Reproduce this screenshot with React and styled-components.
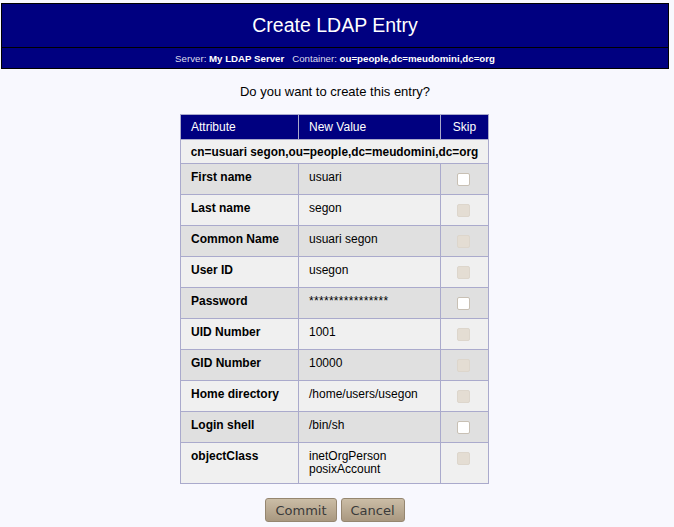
import styled, { createGlobalStyle } from "styled-components";

const GlobalStyle = createGlobalStyle`
  html, body {
    margin: 0;
    padding: 0;
    background: #f8f8fe;
    font-family: "Liberation Sans", Arial, sans-serif;
    color: #000;
  }
`;

const rows = [
  { name: "First name", value: ["usuari"], enabled: true },
  { name: "Last name", value: ["segon"] },
  { name: "Common Name", value: ["usuari segon"] },
  { name: "User ID", value: ["usegon"] },
  { name: "Password", value: ["****************"], enabled: true, masked: true },
  { name: "UID Number", value: ["1001"] },
  { name: "GID Number", value: ["10000"] },
  { name: "Home directory", value: ["/home/users/usegon"] },
  { name: "Login shell", value: ["/bin/sh"], enabled: true },
  { name: "objectClass", value: ["inetOrgPerson", "posixAccount"] },
];

const Page = styled.div`
  padding: 3px 5px 0 1px;
`;

const Header = styled.div`
  background: #000080;
  border: 1px solid #000;
  color: #fff;
`;

const Title = styled.div`
  height: 43px;
  display: flex;
  align-items: center;
  justify-content: center;
  font-size: 19.5px;
  border-bottom: 1px solid #000;
`;

const Info = styled.div`
  height: 20px;
  display: flex;
  align-items: center;
  justify-content: center;
  font-size: 9.7px;
  color: #dde;
  b {
    color: #fff;
    margin-right: 8px;
  }
  b:last-child {
    margin-right: 0;
  }
`;

const Question = styled.div`
  text-align: center;
  font-size: 13px;
  margin: 15px 0 15px;
`;

const Table = styled.table`
  margin: 0 0 0 calc(50% - 155px);
  border-collapse: collapse;
  border: 1px solid #aaaacc;
  font-size: 12px;
  width: 309px;
`;

const Th = styled.th`
  background: #000080;
  color: #fff;
  font-weight: normal;
  text-align: ${({ $center }) => ($center ? "center" : "left")};
  padding: 0 10px;
  height: 24px;
  border: 1px solid #aaaacc;
  width: ${({ $w }) => $w}px;
`;

const DnCell = styled.td`
  background: #f0f0f0;
  font-weight: bold;
  font-size: 11.85px;
  padding: 0 4px;
  height: 23px;
  border: 1px solid #aaaacc;
  text-align: center;
  white-space: nowrap;
`;

const Td = styled.td`
  background: ${({ $odd }) => ($odd ? "#e0e0e0" : "#f0f0f0")};
  border: 1px solid #aaaacc;
  vertical-align: top;
  padding: 7px 10px 7px;
  height: 16px;
  font-weight: ${({ $bold }) => ($bold ? "bold" : "normal")};
  letter-spacing: ${({ $masked }) => ($masked ? "0.3px" : "normal")};
  line-height: 13px;
  white-space: nowrap;
`;

const SkipCell = styled(Td)`
  text-align: center;
  padding: 9px 3px 0 0;
`;

const Check = styled.span`
  display: inline-block;
  width: 11px;
  height: 11px;
  border: 1px solid ${({ $on }) => ($on ? "#c8c0b4" : "#ddd6cc")};
  border-radius: 2px;
  background: ${({ $on }) => ($on ? "#fff" : "#e4ddd3")};
`;

const Buttons = styled.div`
  display: flex;
  justify-content: center;
  gap: 4px;
  margin-top: 14px;
`;

const Button = styled.button`
  font-family: "DejaVu Sans", Verdana, sans-serif;
  font-size: 13px;
  color: #3a3a3a;
  height: 24px;
  padding: 0 9px;
  border: 1px solid #958670;
  border-radius: 3px;
  background: linear-gradient(#cbbda6, #a99880);
  cursor: pointer;
`;

export default function App() {
  return (
    <Page>
      <GlobalStyle />
      <Header>
        <Title>Create LDAP Entry</Title>
        <Info>
          Server:&nbsp;<b>My LDAP Server</b> Container:&nbsp;
          <b>ou=people,dc=meudomini,dc=org</b>
        </Info>
      </Header>
      <Question>Do you want to create this entry?</Question>
      <Table>
        <thead>
          <tr>
            <Th $w={97}>Attribute</Th>
            <Th $w={121}>New Value</Th>
            <Th $w={27} $center>Skip</Th>
          </tr>
        </thead>
        <tbody>
          <tr>
            <DnCell colSpan={3}>cn=usuari segon,ou=people,dc=meudomini,dc=org</DnCell>
          </tr>
          {rows.map((r, i) => (
            <tr key={r.name}>
              <Td $odd={i % 2 === 0} $bold>
                {r.name}
              </Td>
              <Td $odd={i % 2 === 0} $masked={r.masked}>
                {r.value.map((v, j) => (
                  <div key={j}>{v}</div>
                ))}
              </Td>
              <SkipCell $odd={i % 2 === 0}>
                <Check $on={r.enabled} />
              </SkipCell>
            </tr>
          ))}
        </tbody>
      </Table>
      <Buttons>
        <Button>Commit</Button>
        <Button>Cancel</Button>
      </Buttons>
    </Page>
  );
}
